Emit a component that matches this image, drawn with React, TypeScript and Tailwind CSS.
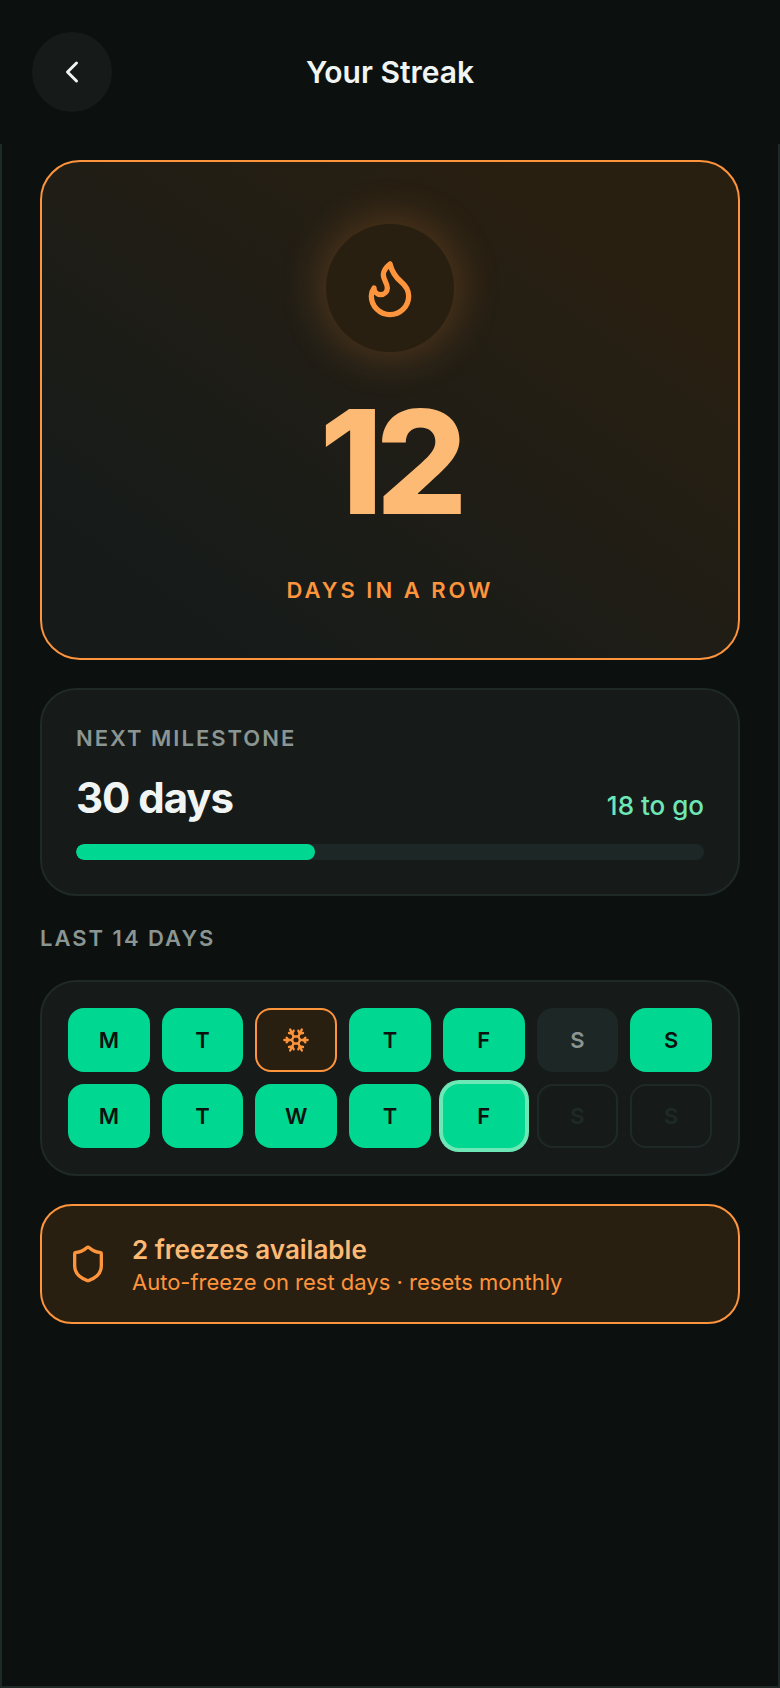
import { ChevronLeft, Flame, Shield, Snowflake } from 'lucide-react';
import clsx from 'clsx';

type DayStatus = 'done' | 'frozen' | 'missed' | 'today' | 'upcoming';

interface Day {
  label: string;
  status: DayStatus;
}

const days: Day[] = [
  { label: 'M', status: 'done' },
  { label: 'T', status: 'done' },
  { label: 'W', status: 'frozen' },
  { label: 'T', status: 'done' },
  { label: 'F', status: 'done' },
  { label: 'S', status: 'missed' },
  { label: 'S', status: 'done' },
  { label: 'M', status: 'done' },
  { label: 'T', status: 'done' },
  { label: 'W', status: 'done' },
  { label: 'T', status: 'done' },
  { label: 'F', status: 'today' },
  { label: 'S', status: 'upcoming' },
  { label: 'S', status: 'upcoming' },
];

const dayStyles: Record<DayStatus, string> = {
  done: 'bg-[#00d891] text-[#0c110f]',
  frozen: 'border-2 border-[#fe943c] bg-[#291f10] text-[#fe943c]',
  missed: 'bg-[#1d2725] text-[#8b9692]',
  today: 'bg-[#00d891] text-[#0c110f] ring-4 ring-[#6ee7b7]',
  upcoming: 'border-2 border-[#1f2a28] text-[#1f2a28]',
};

function DayCell({ day }: { day: Day }) {
  return (
    <li
      className={clsx(
        'flex h-16 items-center justify-center rounded-2xl text-[22px] font-semibold',
        dayStyles[day.status]
      )}
    >
      {day.status === 'frozen' ? <Snowflake size={28} aria-hidden="true" /> : day.label}
    </li>
  );
}

function Header() {
  return (
    <header className="grid grid-cols-[80px_1fr_80px] items-center p-8">
      <button
        type="button"
        aria-label="Back"
        className="flex size-20 items-center justify-center rounded-full bg-[#161b1a]"
      >
        <ChevronLeft size={36} />
      </button>
      <h1 className="text-center text-[30px] leading-10 font-semibold">Your Streak</h1>
    </header>
  );
}

export default function App() {
  const progress = 38;

  return (
    <div className="flex min-h-screen flex-col bg-[#0c110f] font-['Inter',sans-serif] text-[#f0f5f4]">
      <Header />

      <main className="flex flex-1 flex-col gap-7 border-x-2 border-b-2 border-[#1f2a28] px-[38px] pt-4 pb-10">
        {/* Current streak */}
        <section className="flex flex-col items-center rounded-[40px] border-2 border-[#fe943c] bg-linear-to-bl from-[#291f10] from-15% to-[#161b1a] to-85% px-8 pt-[62px] pb-[54px]">
          <div className="flex size-32 items-center justify-center rounded-full bg-[#291f10] shadow-[0_0_40px_8px_rgba(254,148,60,0.2)]">
            <Flame size={64} className="text-[#fe943c]" />
          </div>
          <p className="mt-8 text-[144px] leading-[156px] font-extrabold tracking-tighter text-[#fdba74]">12</p>
          <p className="mt-9 text-[22px] leading-7 font-semibold tracking-[3px] text-[#fe943c] uppercase">
            Days in a row
          </p>
        </section>

        {/* Next milestone */}
        <section className="rounded-[36px] border-2 border-[#1f2a28] bg-[#161b1a] p-[34px]">
          <h2 className="text-[22px] leading-7 font-semibold tracking-[2px] text-[#8b9692] uppercase">
            Next milestone
          </h2>
          <div className="mt-4 flex items-end justify-between">
            <p className="text-[42px] leading-[60px] font-bold tracking-tight">30 days</p>
            <p className="text-[26px] leading-11 font-medium text-[#6ee7b7]">18 to go</p>
          </div>
          <div
            role="progressbar"
            aria-label="Next milestone"
            aria-valuenow={progress}
            className="mt-4 h-4 overflow-hidden rounded-full bg-[#1d2725]"
          >
            <div className="h-full rounded-full bg-[#00d891]" style={{ width: `${progress}%` }} />
          </div>
        </section>

        <h2 className="text-[22px] leading-7 font-semibold tracking-[2px] text-[#8b9692] uppercase">
          Last 14 days
        </h2>

        <ul className="grid grid-cols-7 gap-3 rounded-[36px] border-2 border-[#1f2a28] bg-[#161b1a] p-[26px]">
          {days.map((day, i) => (
            <DayCell key={i} day={day} />
          ))}
        </ul>

        {/* Freezes */}
        <section className="flex items-center gap-6 rounded-[32px] border-2 border-[#fe943c] bg-[#291f10] px-[26px] py-6">
          <Shield size={40} className="shrink-0 text-[#fe943c]" />
          <div className="pt-1">
            <p className="text-[26px] leading-8 font-semibold text-[#fdba74]">2 freezes available</p>
            <p className="text-[22px] leading-8 text-[#fe943c]">Auto-freeze on rest days · resets monthly</p>
          </div>
        </section>
      </main>
    </div>
  );
}
